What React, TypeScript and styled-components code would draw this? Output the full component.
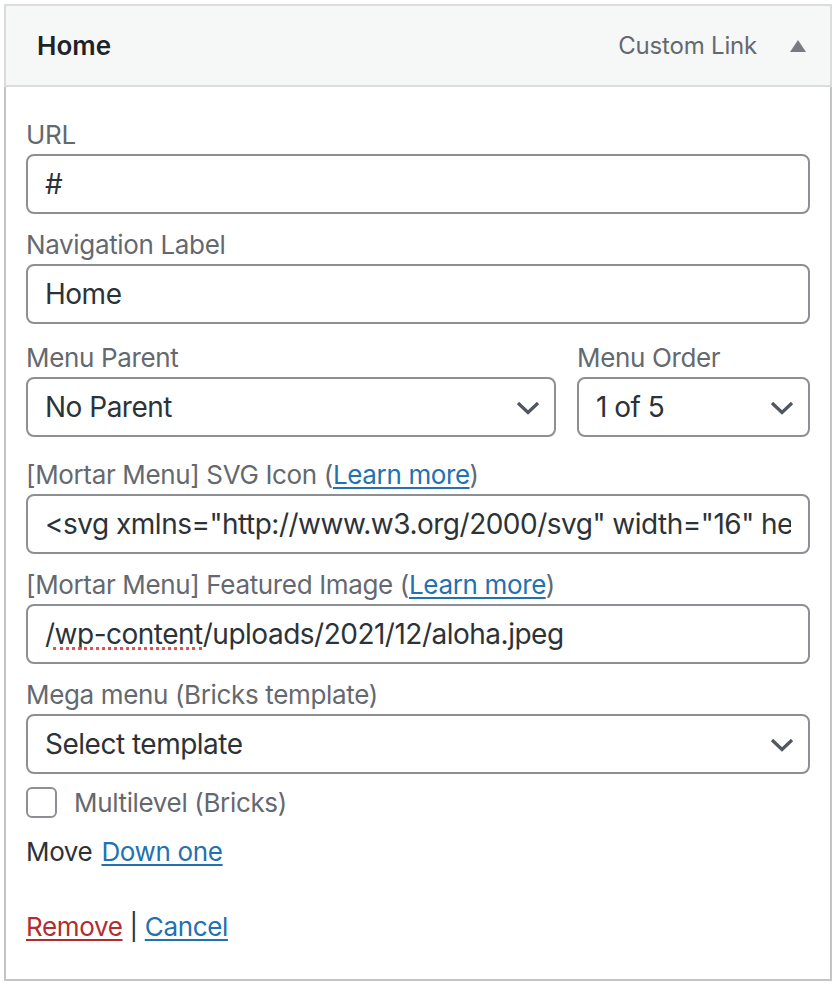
import React from 'react';
import styled, { createGlobalStyle } from 'styled-components';

const GlobalStyle = createGlobalStyle`
  html, body {
    margin: 0;
    padding: 0;
    background: #ffffff;
  }
  body {
    font-family: Inter, "Noto Sans", "Liberation Sans", sans-serif;
  }
  * {
    box-sizing: border-box;
  }
`;

const Panel = styled.div`
  width: 828px;
  margin: 4px 0 0 4px;
`;

const Handle = styled.div`
  display: flex;
  align-items: center;
  justify-content: space-between;
  height: 83px;
  padding: 0 24px 0 31px;
  background: #f6f7f7;
  border: 2px solid #dcdcde;
`;

const ItemTitle = styled.span`
  font-size: 26px;
  font-weight: 600;
  color: #1d2327;
`;

const HandleControls = styled.div`
  display: flex;
  align-items: center;
  gap: 33px;
`;

const ItemType = styled.span`
  font-size: 24px;
  letter-spacing: -0.2px;
  color: #646970;
`;

const Settings = styled.div`
  padding: 30px 20px 34px 20px;
  border: 2px solid #c3c4c7;
  border-top: none;
  background: #ffffff;
  font-size: 26px;
  letter-spacing: -0.35px;
`;

const Field = styled.div`
  margin-bottom: 13px;
`;

const Label = styled.label`
  display: block;
  margin-bottom: 1px;
  line-height: 36px;
  color: #646970;
  white-space: nowrap;
`;

const HelpLink = styled.a`
  color: #2271b1;
  text-decoration: underline;
  text-underline-offset: 3px;
  text-decoration-thickness: 2px;
`;

const TextInput = styled.input`
  display: block;
  width: 100%;
  height: 60px;
  margin: 0;
  padding: 0 17px;
  font-family: inherit;
  font-size: 28px;
  letter-spacing: -0.5px;
  color: #2c3338;
  background: #ffffff;
  border: 2px solid #8c8f94;
  border-radius: 8px;
  outline: none;
`;

const InputWrap = styled.div`
  position: relative;
`;

const SpellMark = styled.span<{ $left: number; $width: number }>`
  position: absolute;
  left: ${(p) => p.$left}px;
  top: 43px;
  width: ${(p) => p.$width}px;
  height: 0;
  border-bottom: 3px dotted #e65054;
  pointer-events: none;
`;

const SelectBox = styled.select`
  display: block;
  width: 100%;
  height: 60px;
  margin: 0;
  padding: 0 48px 0 17px;
  font-family: inherit;
  font-size: 28px;
  letter-spacing: -0.5px;
  color: #2c3338;
  background: #ffffff;
  border: 2px solid #8c8f94;
  border-radius: 8px;
  appearance: none;
  outline: none;
`;

const Chevron = styled.svg`
  position: absolute;
  right: 16px;
  top: 24px;
  pointer-events: none;
`;

const Row = styled.div`
  display: grid;
  grid-template-columns: 530px 1fr;
  gap: 21px;
  margin: 16px 0 20px;

  ${Field} {
    margin-bottom: 0;
  }
`;

const CheckRow = styled.label`
  display: flex;
  align-items: center;
  gap: 17px;
  height: 31px;
  margin-top: 1px;
  color: #646970;
`;

const CheckBox = styled.input`
  width: 31px;
  height: 31px;
  margin: 0;
  border: 2px solid #8c8f94;
  border-radius: 6px;
  background: #ffffff;
  appearance: none;
`;

const MoveRow = styled.div`
  display: flex;
  gap: 9px;
  margin-top: 16px;
  line-height: 36px;
  color: #2c3338;
`;

const ActionLink = styled.a<{ $danger?: boolean }>`
  color: ${(p) => (p.$danger ? '#b32d2e' : '#2271b1')};
  text-decoration: underline;
  text-underline-offset: 3px;
  text-decoration-thickness: 2px;
`;

const Actions = styled.div`
  margin-top: 39px;
  line-height: 36px;
  color: #2c3338;
`;

const Select = ({ value }: { value: string }) => (
  <InputWrap>
    <SelectBox defaultValue={value}>
      <option>{value}</option>
    </SelectBox>
    <Chevron width="24" height="14" viewBox="0 0 24 14">
      <polyline points="2,2 12,11.5 22,2" fill="none" stroke="#50575e" strokeWidth="3.2" />
    </Chevron>
  </InputWrap>
);

const svgCode =
  '<svg xmlns="http://www.w3.org/2000/svg" width="16" height="16" viewBox="0 0 24 24" fill="none"></svg>';

export default function App() {
  return (
    <>
      <GlobalStyle />
      <Panel>
        <Handle>
          <ItemTitle>Home</ItemTitle>
          <HandleControls>
            <ItemType>Custom Link</ItemType>
            <svg width="16" height="12" viewBox="0 0 16 12">
              <polygon points="8,0 16,12 0,12" fill="#787c82" />
            </svg>
          </HandleControls>
        </Handle>
        <Settings>
          <Field>
            <Label>URL</Label>
            <TextInput readOnly value="#" />
          </Field>
          <Field>
            <Label>Navigation Label</Label>
            <TextInput readOnly value="Home" />
          </Field>
          <Row>
            <Field>
              <Label>Menu Parent</Label>
              <Select value="No Parent" />
            </Field>
            <Field>
              <Label>Menu Order</Label>
              <Select value="1 of 5" />
            </Field>
          </Row>
          <Field>
            <Label>
              [Mortar Menu] SVG Icon (<HelpLink href="#">Learn more</HelpLink>)
            </Label>
            <TextInput readOnly value={svgCode} />
          </Field>
          <Field>
            <Label>
              [Mortar Menu] Featured Image (<HelpLink href="#">Learn more</HelpLink>)
            </Label>
            <InputWrap>
              <TextInput readOnly value="/wp-content/uploads/2021/12/aloha.jpeg" />
              <SpellMark $left={27} $width={149} />
            </InputWrap>
          </Field>
          <Field>
            <Label>Mega menu (Bricks template)</Label>
            <Select value="Select template" />
          </Field>
          <CheckRow>
            <CheckBox type="checkbox" />
            Multilevel (Bricks)
          </CheckRow>
          <MoveRow>
            <span>Move</span>
            <ActionLink href="#">Down one</ActionLink>
          </MoveRow>
          <Actions>
            <ActionLink href="#" $danger>
              Remove
            </ActionLink>{' '}
            | <ActionLink href="#">Cancel</ActionLink>
          </Actions>
        </Settings>
      </Panel>
    </>
  );
}
